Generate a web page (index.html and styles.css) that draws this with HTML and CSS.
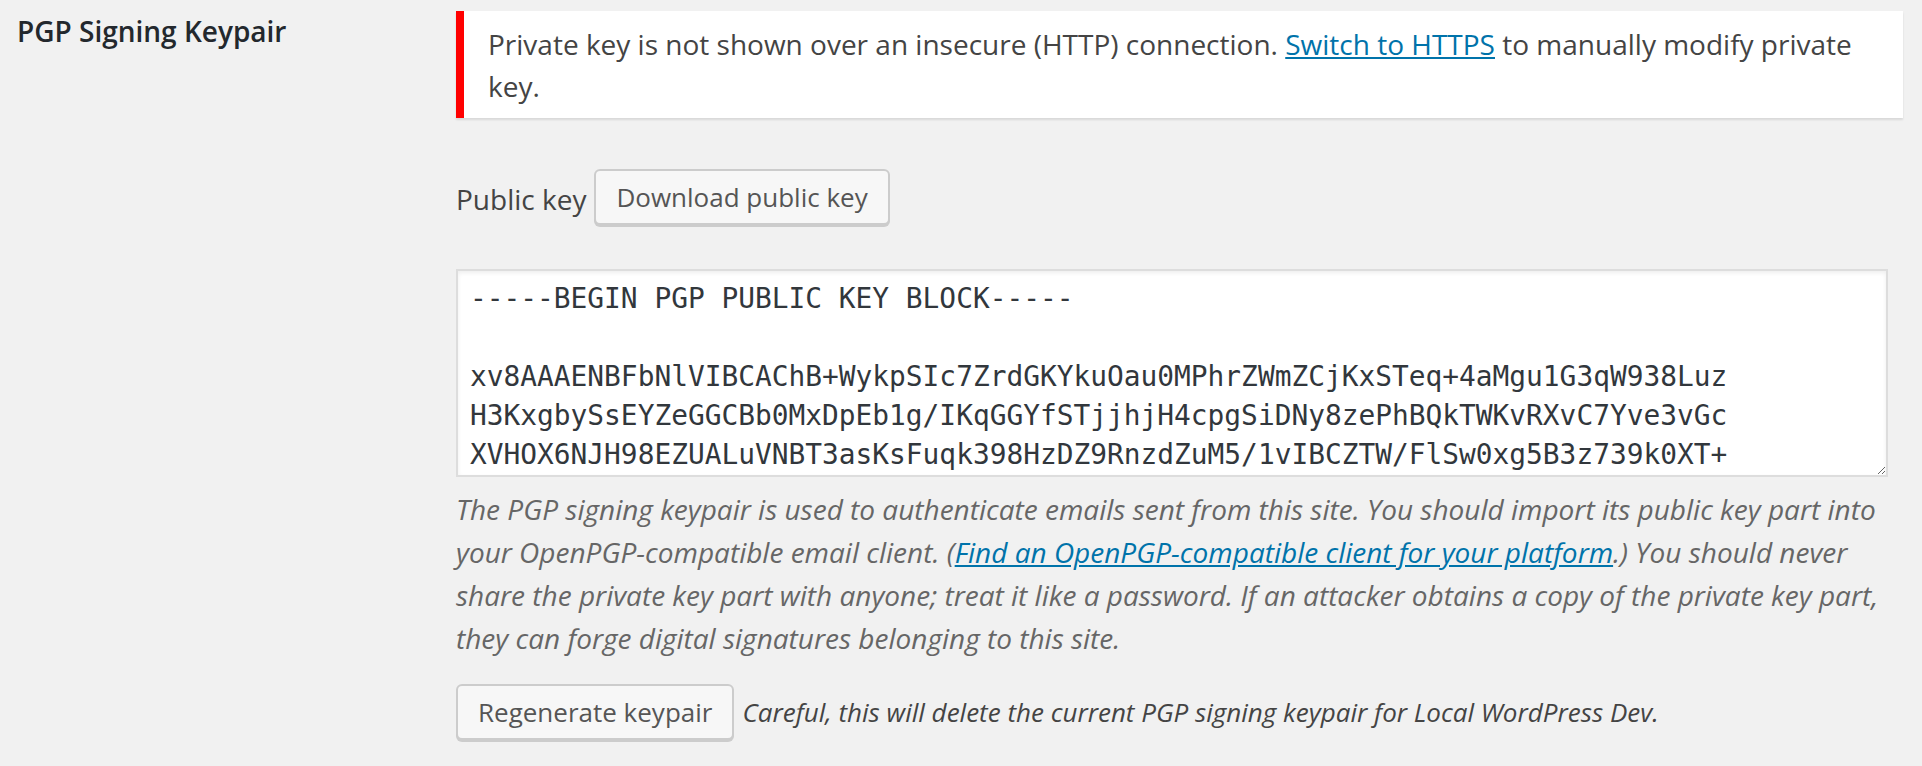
FILE: index.html
```html
<!DOCTYPE html>
<html lang="en">
<head>
<meta charset="utf-8">
<title>PGP Signing Keypair</title>
<link rel="stylesheet" href="styles.css">
</head>
<body>
<div class="form-row">
  <div class="th">PGP Signing Keypair</div>
  <div class="td">
    <div class="notice">
      <p>Private key is not shown over an insecure (HTTP) connection. <a href="#">Switch to HTTPS</a> to manually modify private key.</p>
    </div>
    <div class="pub-row">
      <span class="label">Public key</span>
      <button class="button" type="button">Download public key</button>
    </div>
    <textarea class="keybox" readonly>-----BEGIN PGP PUBLIC KEY BLOCK-----

xv8AAAENBFbNlVIBCAChB+WykpSIc7ZrdGKYkuOau0MPhrZWmZCjKxSTeq+4aMgu1G3qW938Luz
H3KxgbySsEYZeGGCBb0MxDpEb1g/IKqGGYfSTjjhjH4cpgSiDNy8zePhBQkTWKvRXvC7Yve3vGc
XVHOX6NJH98EZUALuVNBT3asKsFuqk398HzDZ9RnzdZuM5/1vIBCZTW/FlSw0xg5B3z739k0XT+
</textarea>
    <p class="description">The PGP signing keypair is used to authenticate emails sent from this site. You should import its public key part into your OpenPGP-compatible email client. (<a href="#">Find an OpenPGP-compatible client for your platform</a>.) You should never share the private key part with anyone; treat it like a password. If an attacker obtains a copy of the private key part, they can forge digital signatures belonging to this site.</p>
    <div class="regen-row">
      <button class="button" type="button">Regenerate keypair</button>
      <span class="careful">Careful, this will delete the current PGP signing keypair for Local WordPress Dev.</span>
    </div>
  </div>
</div>
</body>
</html>
```
FILE: styles.css
```css
html, body {
  margin: 0;
  padding: 0;
  background: #f1f1f1;
}
body {
  font-family: "Open Sans", "Liberation Sans", sans-serif;
  color: #444;
  width: 1922px;
  height: 766px;
  overflow: hidden;
}
a {
  color: #0073aa;
  text-decoration: underline;
}
.form-row {
  display: grid;
  grid-template-columns: 456px 1447px;
}
.th {
  padding: 11px 0 0 17px;
  font-size: 28px;
  font-weight: 600;
  line-height: 40px;
  color: #23282d;
}
.td {
  display: flex;
  flex-direction: column;
  align-items: flex-start;
}
.notice {
  margin-top: 11px;
  align-self: stretch;
  background: #fff;
  border-left: 8px solid #ff0000;
  box-shadow: 0 2px 2px rgba(0, 0, 0, 0.1);
  padding: 12px 24px 11px;
}
.notice p {
  margin: 0;
  font-size: 28px;
  line-height: 42px;
  color: #444;
}
.pub-row {
  margin-top: 51px;
  display: flex;
  align-items: flex-start;
  gap: 8px;
}
.label {
  margin-top: 9px;
  font-size: 28px;
  line-height: 42px;
  color: #444;
}
.button {
  box-sizing: border-box;
  height: 56px;
  padding: 0 20px;
  border: 2px solid #ccc;
  border-radius: 6px;
  background: #f7f7f7;
  box-shadow: 0 2px 0 #ccc;
  font-family: "Open Sans", "Liberation Sans", sans-serif;
  font-size: 26px;
  line-height: 52px;
  color: #555;
  white-space: nowrap;
}
.keybox {
  box-sizing: border-box;
  margin: 44px 0 0 0;
  width: 1432px;
  height: 208px;
  padding: 8px 12px;
  border: 2px solid #ddd;
  border-radius: 0;
  background: #fff;
  box-shadow: inset 0 2px 4px rgba(0, 0, 0, 0.07);
  font-family: "DejaVu Sans Mono", "Liberation Mono", monospace;
  font-size: 27.85px;
  line-height: 39px;
  color: #32373c;
  overflow: hidden;
  resize: both;
}
.description {
  margin: 11px 0 0 0;
  font-size: 28px;
  line-height: 42.9px;
  font-style: italic;
  color: #666;
}
.regen-row {
  margin-top: 24px;
  display: flex;
  align-items: baseline;
  gap: 8px;
}
.careful {
  font-size: 26px;
  font-style: italic;
  color: #444;
}
```
